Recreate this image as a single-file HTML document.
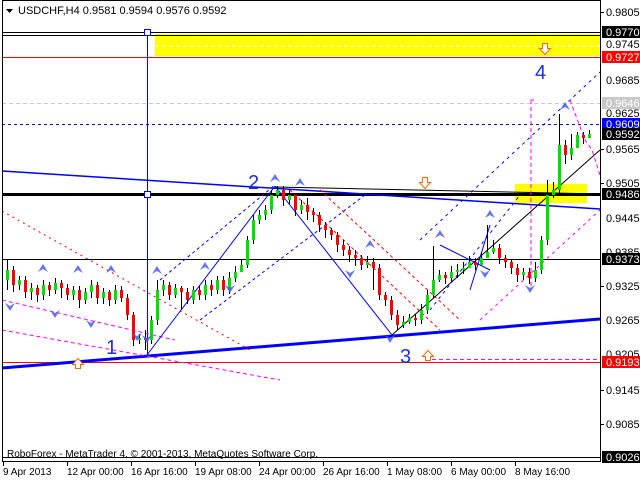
<!DOCTYPE html>
<html><head><meta charset="utf-8"><style>
html,body{margin:0;padding:0;background:#fff;width:640px;height:480px;overflow:hidden}
svg{display:block}
text{font-family:"Liberation Sans",sans-serif;font-size:11px}
.t{font-size:10px}
</style></head><body>
<svg width="640" height="480" viewBox="0 0 640 480" xmlns="http://www.w3.org/2000/svg">
<rect x="0" y="0" width="640" height="480" fill="#fff"/>
<rect x="155" y="34" width="445" height="22" fill="#ffff00"/>
<line x1="155" y1="46" x2="600" y2="46" stroke="#fff" stroke-dasharray="4,3"/>
<rect x="515" y="184" width="72" height="19" fill="#ffff00"/>
<line x1="2" y1="32.5" x2="600" y2="32.5" stroke="#000"/>
<line x1="2" y1="35.5" x2="600" y2="35.5" stroke="#000"/>
<line x1="2" y1="57.5" x2="600" y2="57.5" stroke="#f00"/>
<line x1="2" y1="103.5" x2="600" y2="103.5" stroke="#c8c8c8" stroke-dasharray="4,3"/>
<line x1="2" y1="124.5" x2="600" y2="124.5" stroke="#00f" stroke-dasharray="3,3"/>
<line x1="2" y1="194.5" x2="600" y2="194.5" stroke="#000" stroke-width="3"/>
<line x1="2" y1="259.5" x2="600" y2="259.5" stroke="#000"/>
<line x1="2" y1="362.5" x2="600" y2="362.5" stroke="#f00"/>
<line x1="425" y1="359.5" x2="600" y2="359.5" stroke="#f0f" stroke-dasharray="4,3"/>
<line x1="2" y1="457.5" x2="600" y2="457.5" stroke="#000"/>
<line x1="147.5" y1="32" x2="147.5" y2="356" stroke="#00f"/>
<rect x="144.5" y="29.5" width="6" height="6" fill="#fff" stroke="#00f"/>
<rect x="144.5" y="191.5" width="6" height="6" fill="#fff" stroke="#00f"/>
<line x1="2" y1="368" x2="600" y2="319" stroke="#00f" stroke-width="3"/>
<line x1="2" y1="171" x2="600" y2="209" stroke="#00f" stroke-width="1.5"/>
<line x1="275" y1="187" x2="600" y2="194" stroke="#000"/>
<line x1="2" y1="211" x2="250" y2="350" stroke="#f00" stroke-dasharray="2,4"/>
<line x1="2" y1="330" x2="280" y2="380" stroke="#f0f" stroke-dasharray="4,3"/>
<line x1="2" y1="300" x2="175" y2="340" stroke="#f0f" stroke-dasharray="4,3"/>
<line x1="147" y1="355" x2="275" y2="186" stroke="#00f"/>
<line x1="275" y1="186" x2="392" y2="335" stroke="#00f"/>
<line x1="160" y1="280" x2="275" y2="185" stroke="#00f" stroke-dasharray="3,3"/>
<line x1="200" y1="320" x2="365" y2="195" stroke="#00f" stroke-dasharray="3,3"/>
<line x1="290" y1="190" x2="440" y2="330" stroke="#f00" stroke-dasharray="3,3"/>
<line x1="320" y1="190" x2="460" y2="320" stroke="#f00" stroke-dasharray="3,3"/>
<line x1="392" y1="335" x2="600" y2="150" stroke="#000"/>
<line x1="420" y1="240" x2="600" y2="72" stroke="#00f" stroke-dasharray="3,4"/>
<line x1="430" y1="310" x2="520" y2="195" stroke="#00f" stroke-dasharray="3,4"/>
<line x1="480" y1="320" x2="600" y2="210" stroke="#f0f" stroke-dasharray="3,4"/>
<line x1="531" y1="100" x2="531" y2="290" stroke="#f0f" stroke-dasharray="4,3"/>
<line x1="531" y1="100" x2="534" y2="100" stroke="#f0f"/>
<polyline points="570,100 585,140 592,150 600,175" fill="none" stroke="#f0f" stroke-dasharray="4,3"/>
<line x1="440" y1="245" x2="490" y2="270" stroke="#00f"/>
<line x1="470" y1="290" x2="490" y2="225" stroke="#00f"/>
<g stroke-width="1">
<g stroke="#000">
<line x1="7.5" y1="260" x2="7.5" y2="290"/><line x1="13.5" y1="266" x2="13.5" y2="292"/><line x1="19.5" y1="276" x2="19.5" y2="290"/><line x1="25.5" y1="276" x2="25.5" y2="298"/><line x1="31.5" y1="283" x2="31.5" y2="300"/><line x1="37.5" y1="285" x2="37.5" y2="302"/><line x1="43.5" y1="280" x2="43.5" y2="300"/><line x1="49.5" y1="282" x2="49.5" y2="296"/><line x1="55.5" y1="278" x2="55.5" y2="294"/><line x1="61.5" y1="280" x2="61.5" y2="298"/><line x1="67.5" y1="284" x2="67.5" y2="300"/><line x1="73.5" y1="286" x2="73.5" y2="300"/><line x1="79.5" y1="286" x2="79.5" y2="308"/><line x1="85.5" y1="288" x2="85.5" y2="304"/><line x1="91.5" y1="280" x2="91.5" y2="298"/><line x1="97.5" y1="282" x2="97.5" y2="304"/><line x1="103.5" y1="288" x2="103.5" y2="304"/><line x1="109.5" y1="290" x2="109.5" y2="306"/><line x1="115.5" y1="285" x2="115.5" y2="304"/><line x1="121.5" y1="286" x2="121.5" y2="302"/><line x1="127.5" y1="294" x2="127.5" y2="320"/><line x1="133.5" y1="312" x2="133.5" y2="346"/><line x1="139.5" y1="334" x2="139.5" y2="344"/><line x1="145.5" y1="330" x2="145.5" y2="350"/><line x1="151.5" y1="316" x2="151.5" y2="344"/><line x1="157.5" y1="280" x2="157.5" y2="325"/><line x1="163.5" y1="280" x2="163.5" y2="296"/><line x1="169.5" y1="282" x2="169.5" y2="300"/><line x1="175.5" y1="284" x2="175.5" y2="298"/><line x1="181.5" y1="286" x2="181.5" y2="310"/><line x1="187.5" y1="288" x2="187.5" y2="304"/><line x1="193.5" y1="286" x2="193.5" y2="304"/><line x1="199.5" y1="286" x2="199.5" y2="300"/><line x1="205.5" y1="280" x2="205.5" y2="300"/><line x1="211.5" y1="280" x2="211.5" y2="296"/><line x1="217.5" y1="276" x2="217.5" y2="294"/><line x1="223.5" y1="276" x2="223.5" y2="296"/><line x1="229.5" y1="272" x2="229.5" y2="294"/><line x1="235.5" y1="266" x2="235.5" y2="282"/><line x1="241.5" y1="260" x2="241.5" y2="272"/><line x1="247.5" y1="236" x2="247.5" y2="268"/><line x1="253.5" y1="215" x2="253.5" y2="244"/><line x1="259.5" y1="210" x2="259.5" y2="224"/><line x1="265.5" y1="205" x2="265.5" y2="220"/><line x1="271.5" y1="190" x2="271.5" y2="214"/><line x1="277.5" y1="186" x2="277.5" y2="198"/><line x1="283.5" y1="186" x2="283.5" y2="206"/><line x1="289.5" y1="190" x2="289.5" y2="204"/><line x1="295.5" y1="194" x2="295.5" y2="216"/><line x1="301.5" y1="200" x2="301.5" y2="214"/><line x1="307.5" y1="198" x2="307.5" y2="220"/><line x1="313.5" y1="208" x2="313.5" y2="222"/><line x1="319.5" y1="212" x2="319.5" y2="232"/><line x1="325.5" y1="222" x2="325.5" y2="238"/><line x1="331.5" y1="228" x2="331.5" y2="240"/><line x1="337.5" y1="232" x2="337.5" y2="252"/><line x1="343.5" y1="240" x2="343.5" y2="256"/><line x1="349.5" y1="246" x2="349.5" y2="262"/><line x1="355.5" y1="250" x2="355.5" y2="266"/><line x1="361.5" y1="255" x2="361.5" y2="270"/><line x1="367.5" y1="256" x2="367.5" y2="268"/><line x1="373.5" y1="258" x2="373.5" y2="290"/><line x1="379.5" y1="264" x2="379.5" y2="300"/><line x1="385.5" y1="292" x2="385.5" y2="306"/><line x1="391.5" y1="296" x2="391.5" y2="320"/><line x1="397.5" y1="310" x2="397.5" y2="330"/><line x1="403.5" y1="316" x2="403.5" y2="328"/><line x1="409.5" y1="314" x2="409.5" y2="324"/><line x1="415.5" y1="314" x2="415.5" y2="326"/><line x1="421.5" y1="304" x2="421.5" y2="324"/><line x1="427.5" y1="290" x2="427.5" y2="314"/><line x1="433.5" y1="246" x2="433.5" y2="298"/><line x1="439.5" y1="270" x2="439.5" y2="282"/><line x1="445.5" y1="272" x2="445.5" y2="284"/><line x1="451.5" y1="266" x2="451.5" y2="282"/><line x1="457.5" y1="264" x2="457.5" y2="278"/><line x1="463.5" y1="262" x2="463.5" y2="274"/><line x1="469.5" y1="256" x2="469.5" y2="268"/><line x1="475.5" y1="258" x2="475.5" y2="270"/><line x1="481.5" y1="252" x2="481.5" y2="264"/><line x1="487.5" y1="225" x2="487.5" y2="258"/><line x1="493.5" y1="240" x2="493.5" y2="254"/><line x1="499.5" y1="244" x2="499.5" y2="264"/><line x1="505.5" y1="255" x2="505.5" y2="268"/><line x1="511.5" y1="260" x2="511.5" y2="274"/><line x1="517.5" y1="264" x2="517.5" y2="282"/><line x1="523.5" y1="268" x2="523.5" y2="280"/><line x1="529.5" y1="268" x2="529.5" y2="284"/><line x1="535.5" y1="262" x2="535.5" y2="282"/><line x1="541.5" y1="236" x2="541.5" y2="274"/><line x1="547.5" y1="180" x2="547.5" y2="245"/><line x1="553.5" y1="182" x2="553.5" y2="198"/><line x1="559.5" y1="114" x2="559.5" y2="195"/><line x1="565.5" y1="140" x2="565.5" y2="164"/><line x1="571.5" y1="134" x2="571.5" y2="160"/><line x1="577.5" y1="132" x2="577.5" y2="142"/><line x1="583.5" y1="132" x2="583.5" y2="144"/><line x1="589.5" y1="130" x2="589.5" y2="138"/>
</g>
<g fill="#f00">
<rect x="12" y="270" width="3" height="15"/><rect x="24" y="280" width="3" height="12"/><rect x="36" y="288" width="3" height="7"/><rect x="48" y="285" width="3" height="5"/><rect x="60" y="283" width="3" height="5"/><rect x="66" y="288" width="3" height="7"/><rect x="78" y="290" width="3" height="10"/><rect x="96" y="285" width="3" height="13"/><rect x="108" y="292" width="3" height="8"/><rect x="120" y="290" width="3" height="8"/><rect x="126" y="298" width="3" height="17"/><rect x="132" y="315" width="3" height="25"/><rect x="144" y="338" width="3" height="2"/><rect x="168" y="285" width="3" height="10"/><rect x="180" y="288" width="3" height="4"/><rect x="186" y="292" width="3" height="8"/><rect x="198" y="290" width="3" height="5"/><rect x="210" y="285" width="3" height="5"/><rect x="222" y="280" width="3" height="10"/><rect x="282" y="190" width="3" height="10"/><rect x="294" y="195" width="3" height="15"/><rect x="306" y="205" width="3" height="7"/><rect x="312" y="212" width="3" height="3"/><rect x="318" y="215" width="3" height="10"/><rect x="324" y="225" width="3" height="5"/><rect x="330" y="230" width="3" height="5"/><rect x="336" y="235" width="3" height="10"/><rect x="342" y="245" width="3" height="5"/><rect x="348" y="250" width="3" height="5"/><rect x="354" y="255" width="3" height="3"/><rect x="360" y="258" width="3" height="7"/><rect x="372" y="262" width="3" height="6"/><rect x="378" y="268" width="3" height="27"/><rect x="384" y="295" width="3" height="5"/><rect x="390" y="300" width="3" height="15"/><rect x="396" y="315" width="3" height="10"/><rect x="414" y="318" width="3" height="2"/><rect x="444" y="275" width="3" height="3"/><rect x="474" y="262" width="3" height="3"/><rect x="498" y="248" width="3" height="10"/><rect x="504" y="258" width="3" height="4"/><rect x="510" y="262" width="3" height="6"/><rect x="516" y="268" width="3" height="7"/><rect x="528" y="272" width="3" height="6"/><rect x="564" y="145" width="3" height="10"/><rect x="582" y="135" width="3" height="3"/>
</g>
<g fill="#00e000">
<rect x="6" y="270" width="3" height="10"/><rect x="18" y="280" width="3" height="5"/><rect x="30" y="288" width="3" height="4"/><rect x="42" y="285" width="3" height="10"/><rect x="54" y="283" width="3" height="7"/><rect x="72" y="290" width="3" height="5"/><rect x="84" y="292" width="3" height="8"/><rect x="90" y="285" width="3" height="7"/><rect x="102" y="292" width="3" height="6"/><rect x="114" y="290" width="3" height="10"/><rect x="138" y="338" width="3" height="2"/><rect x="150" y="320" width="3" height="20"/><rect x="156" y="290" width="3" height="30"/><rect x="162" y="285" width="3" height="5"/><rect x="174" y="288" width="3" height="7"/><rect x="192" y="290" width="3" height="10"/><rect x="204" y="285" width="3" height="10"/><rect x="216" y="280" width="3" height="10"/><rect x="228" y="278" width="3" height="12"/><rect x="234" y="272" width="3" height="6"/><rect x="240" y="265" width="3" height="7"/><rect x="246" y="240" width="3" height="25"/><rect x="252" y="220" width="3" height="20"/><rect x="258" y="215" width="3" height="5"/><rect x="264" y="210" width="3" height="5"/><rect x="270" y="195" width="3" height="15"/><rect x="276" y="190" width="3" height="5"/><rect x="288" y="195" width="3" height="5"/><rect x="300" y="205" width="3" height="5"/><rect x="366" y="262" width="3" height="3"/><rect x="402" y="322" width="3" height="3"/><rect x="408" y="318" width="3" height="4"/><rect x="420" y="310" width="3" height="10"/><rect x="426" y="295" width="3" height="15"/><rect x="432" y="280" width="3" height="15"/><rect x="438" y="275" width="3" height="5"/><rect x="450" y="272" width="3" height="6"/><rect x="456" y="270" width="3" height="2"/><rect x="462" y="268" width="3" height="2"/><rect x="468" y="262" width="3" height="6"/><rect x="480" y="258" width="3" height="7"/><rect x="486" y="252" width="3" height="6"/><rect x="492" y="248" width="3" height="4"/><rect x="522" y="272" width="3" height="3"/><rect x="534" y="270" width="3" height="8"/><rect x="540" y="240" width="3" height="30"/><rect x="546" y="195" width="3" height="45"/><rect x="552" y="190" width="3" height="5"/><rect x="558" y="145" width="3" height="45"/><rect x="570" y="148" width="3" height="7"/><rect x="576" y="135" width="3" height="13"/><rect x="588" y="134" width="3" height="4"/>
</g>
</g>
<g fill="#4a5cf0" opacity="0.85">
<path d="M38,272 l5,-8 l5,8 l-5,-3z"/><path d="M73,273 l5,-8 l5,8 l-5,-3z"/><path d="M106,273 l5,-8 l5,8 l-5,-3z"/><path d="M152,274 l5,-8 l5,8 l-5,-3z"/><path d="M200,270 l5,-8 l5,8 l-5,-3z"/><path d="M270,182 l5,-8 l5,8 l-5,-3z"/><path d="M295,186 l5,-8 l5,8 l-5,-3z"/><path d="M365,248 l5,-8 l5,8 l-5,-3z"/><path d="M435,238 l5,-8 l5,8 l-5,-3z"/><path d="M485,218 l5,-8 l5,8 l-5,-3z"/><path d="M560,110 l5,-8 l5,8 l-5,-3z"/>
<path d="M5,303 l5,8 l5,-8 l-5,3z"/><path d="M50,310 l5,8 l5,-8 l-5,3z"/><path d="M86,320 l5,8 l5,-8 l-5,3z"/><path d="M132,333 l5,8 l5,-8 l-5,3z"/><path d="M142,335 l5,8 l5,-8 l-5,3z"/><path d="M225,285 l5,8 l5,-8 l-5,3z"/><path d="M345,270 l5,8 l5,-8 l-5,3z"/><path d="M385,335 l5,8 l5,-8 l-5,3z"/><path d="M480,270 l5,8 l5,-8 l-5,3z"/><path d="M525,285 l5,8 l5,-8 l-5,3z"/>
</g>
<g fill="#fff" stroke="#f60">
<path d="M422.5,177.5 h5 v5 h3 l-5.5,6 l-5.5,-6 h3z"/>
<path d="M542.5,43.5 h5 v5 h3 l-5.5,6 l-5.5,-6 h3z"/>
<path d="M75.5,368.5 h5 v-4 h3 l-5.5,-6 l-5.5,6 h3z"/>
<path d="M425.5,360.5 h5 v-4 h3 l-5.5,-6 l-5.5,6 h3z"/>
</g>
<g fill="#2030e0">
<text x="106" y="354" style="font-size:20px">1</text>
<text x="248" y="189" style="font-size:20px">2</text>
<text x="400" y="363" style="font-size:20px">3</text>
<text x="535" y="79" style="font-size:20px">4</text>
</g>
<rect x="2.5" y="0.5" width="598" height="461" fill="none" stroke="#000"/>
<path d="M6,9 h7 l-3.5,4z" fill="#000"/>
<text x="18" y="14" fill="#000">USDCHF,H4  0.9581 0.9594 0.9576 0.9592</text>
<text x="7" y="457" fill="#000" style="font-size:10px">RoboForex - MetaTrader 4, © 2001-2013, MetaQuotes Software Corp.</text>
<g fill="#000">
<text x="606" y="16">0.9805</text><text x="606" y="48">0.9745</text><text x="606" y="84">0.9685</text><text x="606" y="117">0.9625</text><text x="606" y="153">0.9565</text><text x="606" y="187">0.9505</text><text x="606" y="222">0.9445</text><text x="606" y="256">0.9385</text><text x="606" y="290">0.9325</text><text x="606" y="324">0.9265</text><text x="606" y="358">0.9205</text><text x="606" y="394">0.9145</text><text x="606" y="428">0.9085</text>
</g>
<rect x="602" y="26" width="38" height="12" fill="#000"/><text x="606" y="36" fill="#fff">0.9770</text>
<rect x="602" y="51" width="38" height="12" fill="#f00"/><text x="606" y="61" fill="#fff">0.9727</text>
<rect x="602" y="97" width="38" height="12" fill="#c8c8c8"/><text x="606" y="107" fill="#fff">0.9646</text>
<rect x="602" y="118" width="38" height="12" fill="#00f"/><text x="606" y="128" fill="#fff">0.9609</text>
<rect x="602" y="128" width="38" height="12" fill="#000"/><text x="606" y="138" fill="#fff">0.9592</text>
<rect x="602" y="188" width="38" height="12" fill="#000"/><text x="606" y="198" fill="#fff">0.9486</text>
<rect x="602" y="253" width="38" height="12" fill="#000"/><text x="606" y="263" fill="#fff">0.9373</text>
<rect x="602" y="356" width="38" height="12" fill="#f00"/><text x="606" y="366" fill="#fff">0.9193</text>
<rect x="602" y="451" width="38" height="12" fill="#000"/><text x="606" y="461" fill="#fff">0.9026</text>
<g stroke="#000"><line x1="600" y1="12.5" x2="604" y2="12.5"/><line x1="600" y1="149.5" x2="604" y2="149.5"/><line x1="600" y1="183.5" x2="604" y2="183.5"/><line x1="600" y1="286.5" x2="604" y2="286.5"/><line x1="600" y1="390.5" x2="604" y2="390.5"/><line x1="600" y1="424.5" x2="604" y2="424.5"/></g>
<g stroke="#000"><line x1="3.5" y1="462" x2="3.5" y2="466"/><line x1="67.5" y1="462" x2="67.5" y2="466"/><line x1="131.5" y1="462" x2="131.5" y2="466"/><line x1="195.5" y1="462" x2="195.5" y2="466"/><line x1="259.5" y1="462" x2="259.5" y2="466"/><line x1="323.5" y1="462" x2="323.5" y2="466"/><line x1="387.5" y1="462" x2="387.5" y2="466"/><line x1="451.5" y1="462" x2="451.5" y2="466"/><line x1="515.5" y1="462" x2="515.5" y2="466"/></g>
<g fill="#000" class="t">
<text class="t" x="3" y="475">9 Apr 2013</text><text class="t" x="67" y="475">12 Apr 00:00</text><text class="t" x="131" y="475">16 Apr 16:00</text><text class="t" x="195" y="475">19 Apr 08:00</text><text class="t" x="259" y="475">24 Apr 00:00</text><text class="t" x="323" y="475">26 Apr 16:00</text><text class="t" x="387" y="475">1 May 08:00</text><text class="t" x="451" y="475">6 May 00:00</text><text class="t" x="515" y="475">8 May 16:00</text>
</g>
</svg>
</body></html>
